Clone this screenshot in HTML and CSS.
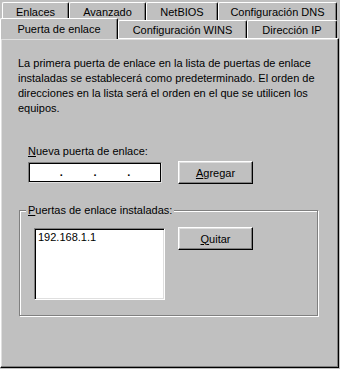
FILE: index.html
```html
<!DOCTYPE html>
<html lang="es">
<head>
    <meta charset="UTF-8">
    <meta name="viewport" content="width=device-width, initial-scale=1.0">
    <title>Propiedades de TCP/IP</title>
    <link rel="stylesheet" href="styles.css">
</head>
<body>
    <div class="dialog">
        <!-- Tabs -->
        <div class="tabs">
            <div class="tab-row back">
                <div class="tab tab-enlaces">Enlaces</div>
                <div class="tab tab-avanzado">Avanzado</div>
                <div class="tab tab-netbios">NetBIOS</div>
                <div class="tab tab-dns">Configuración DNS</div>
            </div>
            <div class="tab-row front">
                <div class="tab tab-puerta active">Puerta de enlace</div>
                <div class="tab tab-wins">Configuración WINS</div>
                <div class="tab tab-ip">Dirección IP</div>
            </div>
        </div>

        <!-- Panel -->
        <div class="panel">
            <p class="intro">
                La primera puerta de enlace en la lista de puertas de enlace<br>
                instaladas se establecerá como predeterminado. El orden de<br>
                direcciones en la lista será el orden en el que se utilicen los<br>
                equipos.
            </p>

            <div class="new-gateway">
                <div class="label"><u>N</u>ueva puerta de enlace:</div>
                <div class="ip-row">
                    <div class="ip-input">
                        <span class="ip-part"></span><span class="ip-dot">.</span>
                        <span class="ip-part"></span><span class="ip-dot">.</span>
                        <span class="ip-part"></span><span class="ip-dot">.</span>
                        <span class="ip-part"></span>
                    </div>
                    <button class="btn"><u>A</u>gregar</button>
                </div>
            </div>

            <div class="group">
                <div class="group-label"><u>P</u>uertas de enlace instaladas:</div>
                <div class="group-body">
                    <div class="listbox">
                        <div class="list-item">192.168.1.1</div>
                    </div>
                    <button class="btn btn-quitar"><u>Q</u>uitar</button>
                </div>
            </div>
        </div>
    </div>
</body>
</html>
```

FILE: styles.css
```css
/* Global */
body {
    margin: 0;
    background: #c0c0c0;
    font-family: "Liberation Sans", Arial, sans-serif;
    font-size: 11px;
    color: #000;
}

.dialog {
    width: 340px;
    height: 369px;
}

/* Tabs */
.tabs {
    height: 38px;
}

.tab-row {
    display: flex;
}

.tab-row.back {
    padding: 2px 0 0 2px;
    height: 18px;
}

.tab-row.front {
    height: 18px;
}

.tab {
    box-sizing: border-box;
    height: 18px;
    display: flex;
    align-items: center;
    justify-content: center;
    background: #c0c0c0;
    border-top: 1px solid #fff;
    border-left: 1px solid #fff;
    border-right: 1px solid #000;
    border-radius: 2px 2px 0 0;
    box-shadow: inset -1px 0 #808080;
    padding-top: 1px;
}

.tab.active {
    position: relative;
    z-index: 1;
    height: 21px;
    margin-top: -2px;
    margin-bottom: -1px;
    padding-bottom: 2px;
}

.tab-enlaces { width: 67px; }
.tab-avanzado { width: 77px; }
.tab-netbios { width: 72px; }
.tab-dns { width: 119px; }
.tab-puerta { width: 118px; }
.tab-wins { width: 129px; }
.tab-ip { width: 90px; }

/* Panel */
.panel {
    box-sizing: border-box;
    width: 339px;
    height: 330px;
    border: 1px solid;
    border-color: #fff #000 #000 #fff;
    box-shadow: inset -1px -1px #808080, inset 1px 1px #dfdfdf;
    padding: 17px 0 0 17px;
}

.intro {
    margin: 0;
    line-height: 15px;
}

/* New gateway */
.new-gateway {
    margin: 29px 0 0 10px;
}

.label {
    line-height: 13px;
}

.ip-row {
    display: flex;
    align-items: center;
    margin-top: 3px;
}

.ip-input {
    box-sizing: border-box;
    width: 134px;
    height: 21px;
    display: flex;
    align-items: center;
    background: #fff;
    border: 1px solid;
    border-color: #808080 #dfdfdf #dfdfdf #808080;
    box-shadow: inset 1px 1px #000, inset -1px -1px #000;
    line-height: 13px;
    font-weight: bold;
}

.ip-part {
    flex: 1;
}

.ip-dot {
    width: 3px;
}

/* Buttons */
.btn {
    box-sizing: border-box;
    width: 75px;
    height: 23px;
    margin-left: 16px;
    padding: 0;
    font: inherit;
    color: #000;
    background: #c0c0c0;
    border: 1px solid;
    border-color: #fff #000 #000 #fff;
    box-shadow: inset -1px -1px #808080, inset 1px 1px #dfdfdf;
}

/* Group box */
.group {
    position: relative;
    box-sizing: border-box;
    width: 299px;
    height: 106px;
    margin: 26px 0 0 1px;
    border: 1px solid #808080;
    box-shadow: inset 1px 1px #fff, 1px 1px #fff;
}

.group-label {
    position: absolute;
    top: -7px;
    left: 6px;
    padding: 0 2px;
    line-height: 13px;
    background: #c0c0c0;
}

.group-body {
    display: flex;
    align-items: flex-start;
    padding: 17px 0 0 14px;
}

.listbox {
    box-sizing: border-box;
    width: 131px;
    height: 72px;
    padding: 2px 2px;
    background: #fff;
    border: 1px solid;
    border-color: #808080 #fff #fff #808080;
    box-shadow: inset 1px 1px #000, inset -1px -1px #dfdfdf;
}

.list-item {
    line-height: 13px;
    padding-left: 1px;
}

.btn-quitar {
    margin-left: 13px;
    margin-top: -1px;
}
```
